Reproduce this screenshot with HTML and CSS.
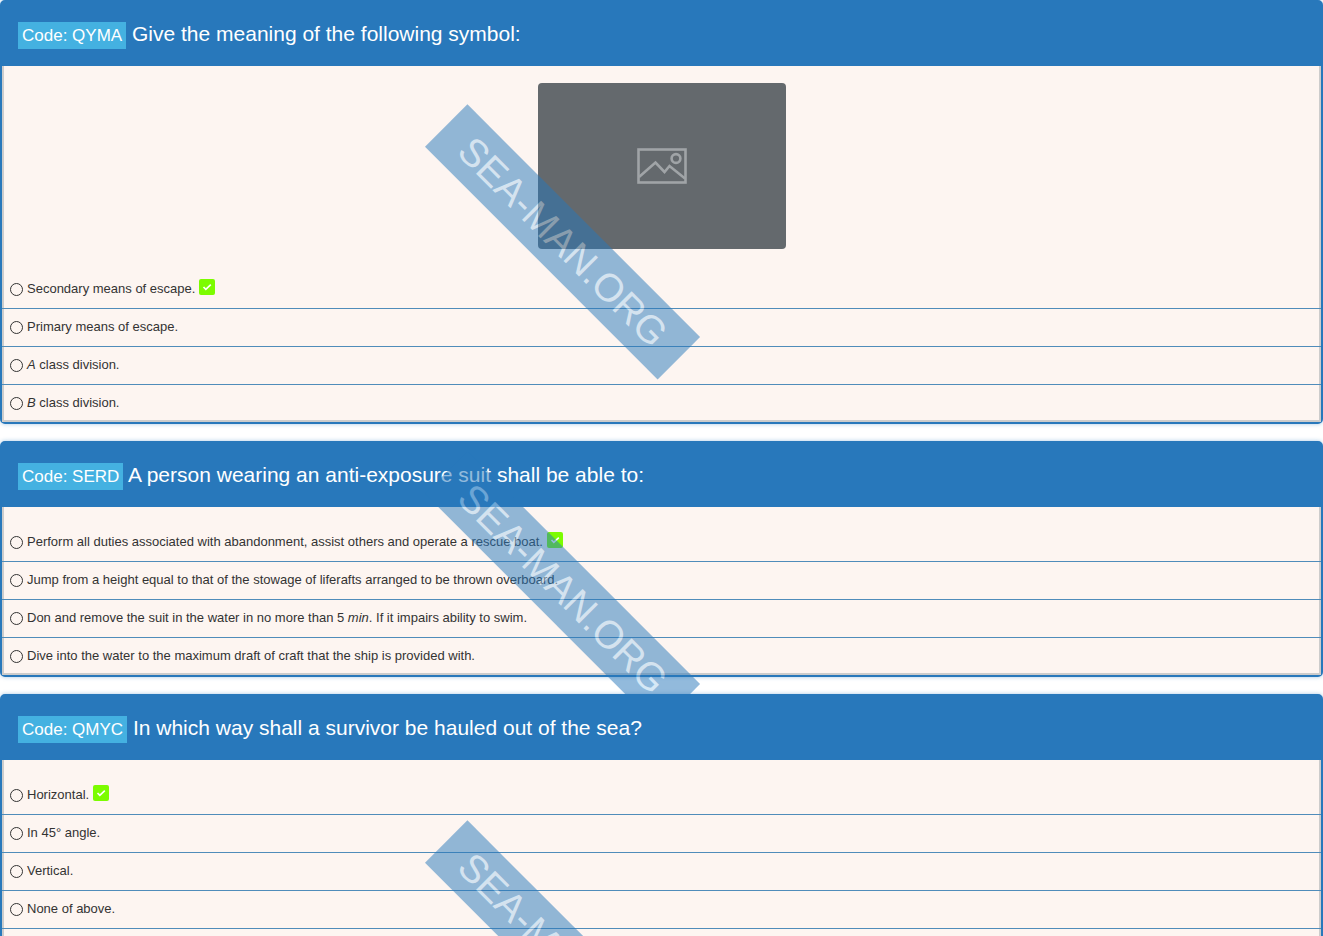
FILE: index.html
```html
<!DOCTYPE html>
<html lang="en">
<head>
    <meta charset="UTF-8">
    <meta name="viewport" content="width=device-width, initial-scale=1.0">
    <title>Personal Survival Test</title>
    <link rel="stylesheet" href="styles.css">
</head>
<body>
    <svg class="sprite" aria-hidden="true">
        <symbol id="check" viewBox="0 0 16 16">
            <rect width="16" height="16" rx="2" fill="#7cfc00"/>
            <path d="M4.5 8l2.3 2.4 5-4.8" fill="none" stroke="#fff" stroke-width="1.6"/>
        </symbol>
    </svg>

    <main class="quiz">
        <section class="card">
            <h2 class="card-header"><span class="code">Code: QYMA</span> Give the meaning of the following symbol:</h2>
            <div class="card-body">
                <div class="picture">
                    <svg class="picture-icon" viewBox="0 0 50 36" fill="none" stroke="#a0a4a7" stroke-width="2.6" role="img" aria-label="Image">
                        <rect x="1.5" y="1.5" width="47" height="33"/>
                        <circle cx="39" cy="10.5" r="4.4"/>
                        <path d="M2 29L18.5 14.5l9 9.5 5-6L48 30.5"/>
                    </svg>
                </div>
                <div class="answers">
                    <label class="answer"><input type="radio" name="qyma"><span>Secondary means of escape. <svg class="check"><use href="#check"/></svg></span></label>
                    <label class="answer"><input type="radio" name="qyma"><span>Primary means of escape.</span></label>
                    <label class="answer"><input type="radio" name="qyma"><span><em>A</em> class division.</span></label>
                    <label class="answer"><input type="radio" name="qyma"><span><em>B</em> class division.</span></label>
                </div>
            </div>
            <div class="watermark">SEA-MAN.ORG</div>
        </section>

        <section class="card">
            <h2 class="card-header"><span class="code">Code: SERD</span> A person wearing an anti-exposure suit shall be able to:</h2>
            <div class="card-body">
                <div class="answers">
                    <label class="answer"><input type="radio" name="serd"><span>Perform all duties associated with abandonment, assist others and operate a rescue boat. <svg class="check"><use href="#check"/></svg></span></label>
                    <label class="answer"><input type="radio" name="serd"><span>Jump from a height equal to that of the stowage of liferafts arranged to be thrown overboard.</span></label>
                    <label class="answer"><input type="radio" name="serd"><span>Don and remove the suit in the water in no more than 5 <em>min</em>. If it impairs ability to swim.</span></label>
                    <label class="answer"><input type="radio" name="serd"><span>Dive into the water to the maximum draft of craft that the ship is provided with.</span></label>
                </div>
            </div>
            <div class="watermark">SEA-MAN.ORG</div>
        </section>

        <section class="card card-tall">
            <h2 class="card-header"><span class="code">Code: QMYC</span> In which way shall a survivor be hauled out of the sea?</h2>
            <div class="card-body">
                <div class="answers">
                    <label class="answer"><input type="radio" name="qmyc"><span>Horizontal. <svg class="check"><use href="#check"/></svg></span></label>
                    <label class="answer"><input type="radio" name="qmyc"><span>In 45° angle.</span></label>
                    <label class="answer"><input type="radio" name="qmyc"><span>Vertical.</span></label>
                    <label class="answer"><input type="radio" name="qmyc"><span>None of above.</span></label>
                </div>
            </div>
            <div class="watermark">SEA-MAN.ORG</div>
        </section>
    </main>
</body>
</html>
```
FILE: styles.css
```css
* {
    margin: 0;
    padding: 0;
    box-sizing: border-box;
}
body {
    font-family: "Liberation Sans", Arial, sans-serif;
    font-size: 13px;
    color: #333;
    background-color: #fff;
    height: 100vh;
    overflow: hidden;
}
.sprite {
    display: none;
}
.quiz {
    display: flex;
    flex-direction: column;
    gap: 17px;
}
.card {
    position: relative;
    display: flex;
    flex-direction: column;
    flex-shrink: 0;
    border: 2px solid #2878bb;
    border-radius: 5px;
    background-color: #fdf5f1;
    box-shadow: 0 0 4px rgba(40, 120, 187, 0.4);
}
.card-tall {
    min-height: 467px;
}
.card-header {
    padding: 16px;
    background-color: #2878bb;
    color: #fff;
    font-size: 21px;
    font-weight: 400;
    line-height: 32px;
}
.code {
    display: inline-block;
    padding: 0 4px;
    background-color: #44b1e1;
    font-size: 17px;
    line-height: 27px;
}
.card-body {
    flex: 1;
    padding-top: 17px;
    box-shadow: inset 2px -2px #ccc, inset -2px 0 #ccc;
}
.picture {
    display: flex;
    justify-content: center;
    align-items: center;
    width: 248px;
    height: 166px;
    margin: 0 auto 22px;
    border-radius: 4px;
    background-color: #64696d;
}
.picture-icon {
    width: 50px;
    height: 36px;
}
.answer {
    display: flex;
    align-items: center;
    gap: 4px;
    padding: 6px 8px 7px;
    border-bottom: 1px solid #4f8cba;
    line-height: 24px;
}
.answer:last-child {
    border-bottom: none;
}
.card-tall .answer:last-child {
    border-bottom: 1px solid #4f8cba;
}
.answer input {
    appearance: none;
    width: 13px;
    height: 13px;
    border: 1px solid #333;
    border-radius: 50%;
}
.answer input:checked {
    background-color: #2878bb;
}
.check {
    width: 16px;
    height: 16px;
    vertical-align: -2px;
}
.watermark {
    position: absolute;
    top: 50%;
    left: 30%;
    padding: 0 26px;
    background-color: #2878bb;
    color: #add2ef;
    font-size: 39px;
    line-height: 60px;
    opacity: 0.5;
    transform: rotate(45deg);
    pointer-events: none;
}
```
